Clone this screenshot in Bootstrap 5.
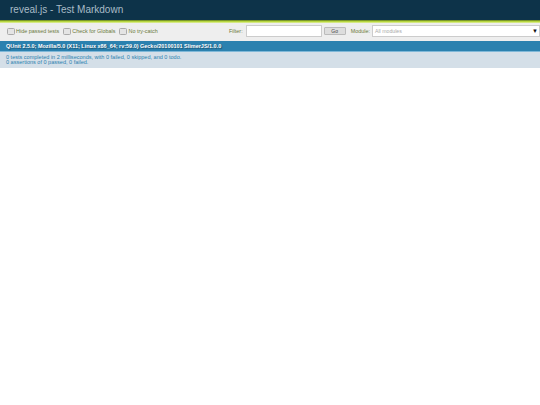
<!DOCTYPE html>
<html lang="en">
<head>
<meta charset="utf-8">
<title>reveal.js - Test Markdown</title>
<link href="https://cdn.jsdelivr.net/npm/bootstrap@5.3.0/dist/css/bootstrap.min.css" rel="stylesheet">
<style>
html,body{background:#fff;font-family:"Liberation Sans",Arial,sans-serif;}
.q-head{background:#0d3349;color:#a9bcc7;height:20px;padding-left:10px;font-size:10px;line-height:20px;}
.q-line{height:3px;background:linear-gradient(#5f7a1e,#c6e746 60%,#dfe9b0);}
.q-bar{background:#eee;height:18px;padding:0 0 2px 7px;font-size:5.45px;color:#5e740b;}
.q-check{width:8px;height:7px;border:1px solid #aaa;border-radius:1.5px;background:#e4e4e4;margin-right:1px;flex:none;}
.q-lab{color:#6b7a3c;white-space:nowrap;margin-right:4px;}
.q-filter{width:76px;height:12px;border:1px solid #ccc;background:#fff;margin:0 2px 0 3px;}
.q-go{width:22px;height:8px;background:#ddd;border:1px solid #bbb;border-radius:1px;font-size:5px;line-height:6px;text-align:center;color:#444;margin-right:5px;}
.q-sel{width:168px;height:12px;border:1px solid #ccc;background:#fff;color:#aaa;margin:0 0 0 2px;padding:0 1px 0 2px;font-size:5.2px;line-height:10px;flex:none;}
.q-arrow{color:#111;font-size:6px;}
.q-agent{background:#2b81af;color:#fff;height:10px;padding-left:6px;font-size:5.48px;line-height:10px;font-weight:700;text-shadow:1px 1px 1px rgba(0,0,0,.4);white-space:nowrap;border-bottom:1px solid #7fb8d8;box-sizing:content-box;}
.q-res{background:#d4dfe8;color:#2b81af;height:16px;padding:3px 0 0 6px;font-size:5.54px;line-height:5.2px;}
</style>
</head>
<body>
<h1 class="q-head m-0 fw-normal">reveal.js - Test Markdown</h1>
<div class="q-line"></div>
<div class="q-bar d-flex align-items-center">
  <span class="q-check"></span><span class="q-lab">Hide passed tests</span>
  <span class="q-check"></span><span class="q-lab">Check for Globals</span>
  <span class="q-check"></span><span class="q-lab">No try-catch</span>
  <span class="q-lab ms-auto me-0">Filter:</span>
  <span class="q-filter"></span>
  <span class="q-go">Go</span>
  <span class="q-lab me-0">Module:</span>
  <span class="q-sel d-flex justify-content-between align-items-center"><span>All modules</span><span class="q-arrow">▼</span></span>
</div>
<div class="q-agent">QUnit 2.5.0; Mozilla/5.0 (X11; Linux x86_64; rv:59.0) Gecko/20100101 SlimerJS/1.0.0</div>
<div class="q-res">0 tests completed in 2 milliseconds, with 0 failed, 0 skipped, and 0 todo.<br>0 assertions of 0 passed, 0 failed.</div>
<script src="https://cdn.jsdelivr.net/npm/bootstrap@5.3.0/dist/js/bootstrap.bundle.min.js"></script>
</body>
</html>
